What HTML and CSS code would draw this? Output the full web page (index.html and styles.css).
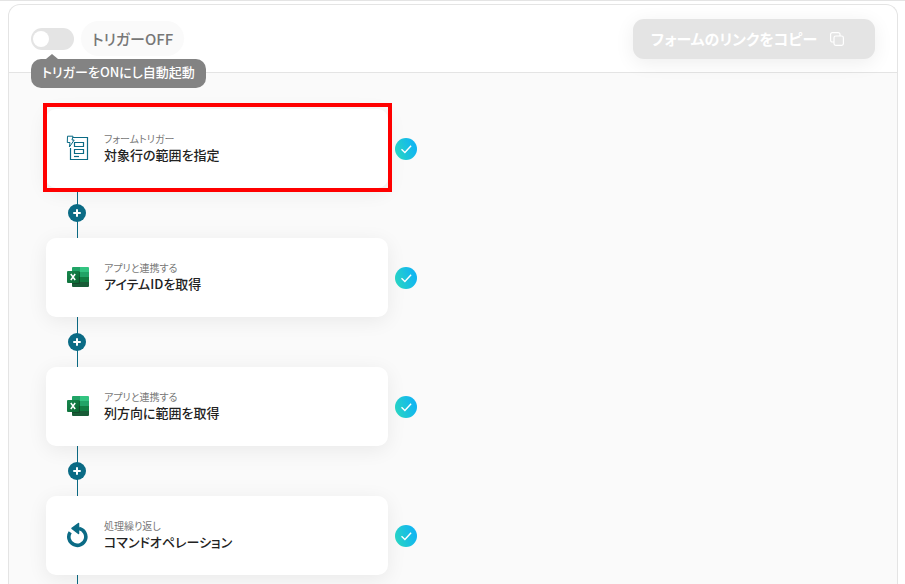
FILE: index.html
```html
<!DOCTYPE html>
<html lang="ja">
  <head>
    <meta charset="UTF-8" />
    <meta name="viewport" content="width=device-width, initial-scale=1.0" />
    <title>フロー編集</title>
    <link rel="stylesheet" href="styles.css">
  </head>
  <body>
    <svg class="defs" width="0" height="0" aria-hidden="true">
      <defs>
        <linearGradient id="green" x1="0" y1="0" x2="1" y2="1">
          <stop offset="0" stop-color="#18884f" />
          <stop offset="1" stop-color="#0b6631" />
        </linearGradient>
        <symbol id="excel" viewBox="0 0 22 20">
          <path fill="#21a366" d="M6 0h8v5H5V1a1 1 0 0 1 1-1z" />
          <path fill="#33c481" d="M13 0h8a1 1 0 0 1 1 1v4h-9z" />
          <path fill="#107c41" d="M5 5h8v5H5z" />
          <path fill="#21a366" d="M13 5h9v5h-9z" />
          <path fill="#185c37" d="M5 10h8v5h9v4a1 1 0 0 1-1 1H6a1 1 0 0 1-1-1z" />
          <path fill="#107c41" d="M13 10h9v5h-9z" />
          <path fill="#000" opacity="0.2" d="M5 4h7a1 1 0 0 1 1 1v11a1 1 0 0 1-1 1H5z" />
          <rect x="0" y="4" width="12" height="12" rx="1" fill="url(#green)" />
          <path fill="none" stroke="#fff" stroke-width="1.5" d="M3.8 7l4.4 6M8.2 7l-4.4 6" />
        </symbol>
        <symbol id="check" viewBox="0 0 22 22">
          <path fill="none" stroke="#fff" stroke-width="1.4" d="M6.5 11.2l3.4 3.3 6.2-6.8" />
        </symbol>
        <symbol id="plus" viewBox="0 0 18 18">
          <path fill="none" stroke="#fff" stroke-width="2" stroke-linecap="round" d="M9 6v6M6 9h6" />
        </symbol>
      </defs>
    </svg>

    <main class="panel">
      <header class="toolbar">
        <div class="trigger">
          <input type="checkbox" id="trigger" class="switch" />
          <label for="trigger" class="trigger-label">トリガーOFF</label>
          <div class="tooltip" role="tooltip">トリガーをONにし自動起動</div>
        </div>
        <button class="copy" disabled>
          フォームのリンクをコピー
          <svg width="14" height="14" viewBox="0 0 14 14" fill="none" stroke="#fff" stroke-width="1.2">
            <rect x="4" y="4" width="9.4" height="9.4" rx="1.8" />
            <path d="M4 10H2.4A1.8 1.8 0 0 1 .6 8.2V2.4A1.8 1.8 0 0 1 2.4.6h5.8A1.8 1.8 0 0 1 10 2.4V4" />
          </svg>
        </button>
      </header>

      <div class="flow">
        <div class="step selected">
          <div class="card">
            <svg class="icon" viewBox="0 0 24 26" fill="none" stroke="#0b6b85" stroke-width="1.2">
              <path d="M7 2.5h14.5v22H4.500V13" />
              <path d="M1.500 1.200h5.500L6 5h2.200L3.400 12l.6-4.500H1.300z" stroke-width="1" />
              <path d="M8.500 7.500h9v4h-9zM8.500 14.500h9v4h-9z" />
              <path d="M8 21.500h5" />
            </svg>
            <div>
              <p class="kind">フォームトリガー</p>
              <p class="name">対象行の範囲を指定</p>
            </div>
          </div>
          <svg class="status"><use href="#check" /></svg>
        </div>
        <div class="link">
          <button class="add" aria-label="追加"><svg><use href="#plus" /></svg></button>
        </div>

        <div class="step">
          <div class="card">
            <svg class="icon excel"><use href="#excel" /></svg>
            <div>
              <p class="kind">アプリと連携する</p>
              <p class="name">アイテムIDを取得</p>
            </div>
          </div>
          <svg class="status"><use href="#check" /></svg>
        </div>
        <div class="link">
          <button class="add" aria-label="追加"><svg><use href="#plus" /></svg></button>
        </div>

        <div class="step">
          <div class="card">
            <svg class="icon excel"><use href="#excel" /></svg>
            <div>
              <p class="kind">アプリと連携する</p>
              <p class="name">列方向に範囲を取得</p>
            </div>
          </div>
          <svg class="status"><use href="#check" /></svg>
        </div>
        <div class="link">
          <button class="add" aria-label="追加"><svg><use href="#plus" /></svg></button>
        </div>

        <div class="step">
          <div class="card">
            <svg class="icon" viewBox="0 0 24 26">
              <path fill="none" stroke="#0b6b85" stroke-width="3.6" d="M4.200 10.200A8.500 8.500 0 1 0 13 6.500" />
              <path fill="#0b6b85" d="M6 6.300L12.500 1.500v10z" stroke="#0b6b85" stroke-width="1.500" stroke-linejoin="round" />
            </svg>
            <div>
              <p class="kind">処理繰り返し</p>
              <p class="name">コマンドオペレーション</p>
            </div>
          </div>
          <svg class="status"><use href="#check" /></svg>
        </div>
        <div class="link"></div>
      </div>
    </main>
  </body>
</html>
```

FILE: styles.css
```css
*,
*::before,
*::after {
  box-sizing: border-box;
}

body {
  margin: 0;
  padding: 3px 7px 0 8px;
  height: 100vh;
  overflow: hidden;
  border-top: 1px solid #e4e4e4;
  background-color: #fff;
  color: #222;
  font-family: "Noto Sans CJK JP", sans-serif;
  font-feature-settings: "palt";
}

p {
  margin: 0;
}

.defs {
  position: absolute;
}

.panel {
  border: 1px solid #e4e4e4;
  border-bottom: 0;
  border-radius: 12px 12px 0 0;
}

.toolbar {
  display: flex;
  align-items: center;
  justify-content: space-between;
  height: 68px;
  padding: 0 22px;
  border-bottom: 1px solid #e4e4e4;
}

.trigger {
  position: relative;
  display: flex;
  align-items: center;
  gap: 7px;
}

.switch {
  appearance: none;
  width: 43px;
  height: 22px;
  margin: 0;
  padding: 3px 2px;
  border-radius: 11px;
  background-color: #e4e4e4;
}

.switch::before {
  content: "";
  display: block;
  width: 16px;
  height: 16px;
  border-radius: 50%;
  background-color: #fff;
}

.trigger-label {
  padding: 0 11px;
  border-radius: 18px;
  background-color: #fafafa;
  color: #777;
  font-size: 15px;
  font-weight: 500;
  line-height: 35px;
}

.tooltip {
  position: absolute;
  z-index: 1;
  top: 38px;
  left: 0;
  padding: 0 11px 3px;
  border-radius: 10px;
  background-color: #838383;
  color: #fff;
  font-size: 13px;
  font-weight: 500;
  line-height: 26px;
  white-space: nowrap;
}

.tooltip::before {
  content: "";
  position: absolute;
  left: 15px;
  bottom: 100%;
  border: 6px solid transparent;
  border-top: 0;
  border-bottom: 5px solid #838383;
}

.copy {
  display: flex;
  align-items: center;
  gap: 13px;
  width: 242px;
  height: 40px;
  padding: 0 18px;
  border: none;
  border-radius: 11px;
  background-color: #e4e4e4;
  box-shadow: 0 4px 20px rgba(0, 0, 0, 0.07);
  color: #fff;
  font: bold 15px "Noto Sans CJK JP", sans-serif;
  font-feature-settings: "palt";
  white-space: nowrap;
}

.flow {
  padding: 36px 37px 0;
  background-color: #fafafa;
}

.step {
  position: relative;
  display: flex;
  align-items: center;
  gap: 7px;
}

/* red frame round the current step */
.selected::after {
  content: "";
  position: absolute;
  top: -6px;
  left: -3px;
  width: 349px;
  height: 89px;
  border: 4px solid #f00;
}

.card {
  display: flex;
  align-items: center;
  gap: 14px;
  width: 342px;
  height: 79px;
  padding: 0 20px 2px;
  border-radius: 10px;
  background-color: #fff;
  box-shadow: 0 4px 20px rgba(0, 0, 0, 0.07);
}

.icon {
  width: 24px;
  height: 26px;
}

.excel {
  height: 20px;
}

.kind {
  color: #777;
  font-size: 10px;
  line-height: 14px;
}

.name {
  font-size: 13px;
  font-weight: 500;
  line-height: 18px;
}

.status {
  width: 22px;
  height: 22px;
  border-radius: 50%;
  background: linear-gradient(70deg, #2bd9bd, #12b6f0 80%);
}

.link {
  display: flex;
  align-items: center;
  width: 63px;
  height: 50px;
  padding-left: 22px;
  background: linear-gradient(#0b6b85, #0b6b85) 31px 0 / 1px 100% no-repeat;
}

.add {
  width: 18px;
  height: 18px;
  padding: 0;
  border: none;
  border-radius: 50%;
  background-color: #0b6b85;
}

.add svg {
  display: block;
  width: 18px;
  height: 18px;
}
```
